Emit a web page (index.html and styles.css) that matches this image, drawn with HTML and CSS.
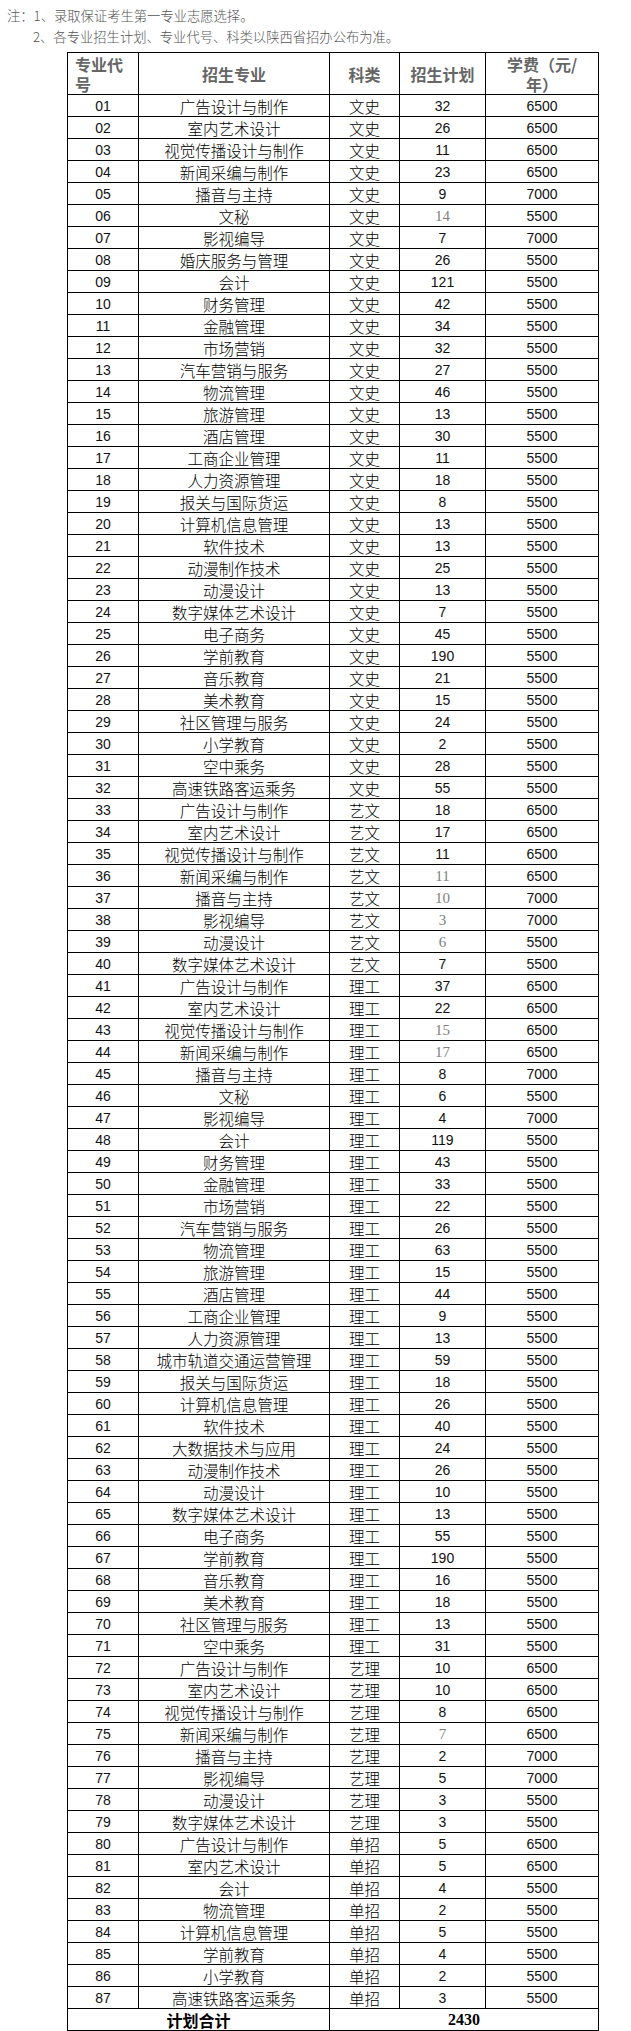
FILE: index.html
```html
<!DOCTYPE html>
<html lang="zh-CN">
<head>
<meta charset="utf-8">
<title>招生计划</title>
<link rel="stylesheet" href="styles.css">
</head>
<body>
<div class="notes">
  <p class="note"><span class="lbl">注：</span>1、录取保证考生第一专业志愿选择。</p>
  <p class="note indent">2、各专业招生计划、专业代号、科类以陕西省招办公布为准。</p>
</div>
<table class="plan">
  <colgroup>
    <col class="c1"><col class="c2"><col class="c3"><col class="c4"><col class="c5">
  </colgroup>
  <thead>
    <tr class="head">
      <th class="left">专业代<br>号</th>
      <th>招生专业</th>
      <th>科类</th>
      <th>招生计划</th>
      <th>学费（元/<br>年）</th>
    </tr>
  </thead>
  <tbody>
    <tr><td class="n">01</td><td>广告设计与制作</td><td>文史</td><td class="n">32</td><td class="n">6500</td></tr>
    <tr><td class="n">02</td><td>室内艺术设计</td><td>文史</td><td class="n">26</td><td class="n">6500</td></tr>
    <tr><td class="n">03</td><td>视觉传播设计与制作</td><td>文史</td><td class="n">11</td><td class="n">6500</td></tr>
    <tr><td class="n">04</td><td>新闻采编与制作</td><td>文史</td><td class="n">23</td><td class="n">6500</td></tr>
    <tr><td class="n">05</td><td>播音与主持</td><td>文史</td><td class="n">9</td><td class="n">7000</td></tr>
    <tr><td class="n">06</td><td>文秘</td><td>文史</td><td class="g">14</td><td class="n">5500</td></tr>
    <tr><td class="n">07</td><td>影视编导</td><td>文史</td><td class="n">7</td><td class="n">7000</td></tr>
    <tr><td class="n">08</td><td>婚庆服务与管理</td><td>文史</td><td class="n">26</td><td class="n">5500</td></tr>
    <tr><td class="n">09</td><td>会计</td><td>文史</td><td class="n">121</td><td class="n">5500</td></tr>
    <tr><td class="n">10</td><td>财务管理</td><td>文史</td><td class="n">42</td><td class="n">5500</td></tr>
    <tr><td class="n">11</td><td>金融管理</td><td>文史</td><td class="n">34</td><td class="n">5500</td></tr>
    <tr><td class="n">12</td><td>市场营销</td><td>文史</td><td class="n">32</td><td class="n">5500</td></tr>
    <tr><td class="n">13</td><td>汽车营销与服务</td><td>文史</td><td class="n">27</td><td class="n">5500</td></tr>
    <tr><td class="n">14</td><td>物流管理</td><td>文史</td><td class="n">46</td><td class="n">5500</td></tr>
    <tr><td class="n">15</td><td>旅游管理</td><td>文史</td><td class="n">13</td><td class="n">5500</td></tr>
    <tr><td class="n">16</td><td>酒店管理</td><td>文史</td><td class="n">30</td><td class="n">5500</td></tr>
    <tr><td class="n">17</td><td>工商企业管理</td><td>文史</td><td class="n">11</td><td class="n">5500</td></tr>
    <tr><td class="n">18</td><td>人力资源管理</td><td>文史</td><td class="n">18</td><td class="n">5500</td></tr>
    <tr><td class="n">19</td><td>报关与国际货运</td><td>文史</td><td class="n">8</td><td class="n">5500</td></tr>
    <tr><td class="n">20</td><td>计算机信息管理</td><td>文史</td><td class="n">13</td><td class="n">5500</td></tr>
    <tr><td class="n">21</td><td>软件技术</td><td>文史</td><td class="n">13</td><td class="n">5500</td></tr>
    <tr><td class="n">22</td><td>动漫制作技术</td><td>文史</td><td class="n">25</td><td class="n">5500</td></tr>
    <tr><td class="n">23</td><td>动漫设计</td><td>文史</td><td class="n">13</td><td class="n">5500</td></tr>
    <tr><td class="n">24</td><td>数字媒体艺术设计</td><td>文史</td><td class="n">7</td><td class="n">5500</td></tr>
    <tr><td class="n">25</td><td>电子商务</td><td>文史</td><td class="n">45</td><td class="n">5500</td></tr>
    <tr><td class="n">26</td><td>学前教育</td><td>文史</td><td class="n">190</td><td class="n">5500</td></tr>
    <tr><td class="n">27</td><td>音乐教育</td><td>文史</td><td class="n">21</td><td class="n">5500</td></tr>
    <tr><td class="n">28</td><td>美术教育</td><td>文史</td><td class="n">15</td><td class="n">5500</td></tr>
    <tr><td class="n">29</td><td>社区管理与服务</td><td>文史</td><td class="n">24</td><td class="n">5500</td></tr>
    <tr><td class="n">30</td><td>小学教育</td><td>文史</td><td class="n">2</td><td class="n">5500</td></tr>
    <tr><td class="n">31</td><td>空中乘务</td><td>文史</td><td class="n">28</td><td class="n">5500</td></tr>
    <tr><td class="n">32</td><td>高速铁路客运乘务</td><td>文史</td><td class="n">55</td><td class="n">5500</td></tr>
    <tr><td class="n">33</td><td>广告设计与制作</td><td>艺文</td><td class="n">18</td><td class="n">6500</td></tr>
    <tr><td class="n">34</td><td>室内艺术设计</td><td>艺文</td><td class="n">17</td><td class="n">6500</td></tr>
    <tr><td class="n">35</td><td>视觉传播设计与制作</td><td>艺文</td><td class="n">11</td><td class="n">6500</td></tr>
    <tr><td class="n">36</td><td>新闻采编与制作</td><td>艺文</td><td class="g">11</td><td class="n">6500</td></tr>
    <tr><td class="n">37</td><td>播音与主持</td><td>艺文</td><td class="g">10</td><td class="n">7000</td></tr>
    <tr><td class="n">38</td><td>影视编导</td><td>艺文</td><td class="g">3</td><td class="n">7000</td></tr>
    <tr><td class="n">39</td><td>动漫设计</td><td>艺文</td><td class="g">6</td><td class="n">5500</td></tr>
    <tr><td class="n">40</td><td>数字媒体艺术设计</td><td>艺文</td><td class="n">7</td><td class="n">5500</td></tr>
    <tr><td class="n">41</td><td>广告设计与制作</td><td>理工</td><td class="n">37</td><td class="n">6500</td></tr>
    <tr><td class="n">42</td><td>室内艺术设计</td><td>理工</td><td class="n">22</td><td class="n">6500</td></tr>
    <tr><td class="n">43</td><td>视觉传播设计与制作</td><td>理工</td><td class="g">15</td><td class="n">6500</td></tr>
    <tr><td class="n">44</td><td>新闻采编与制作</td><td>理工</td><td class="g">17</td><td class="n">6500</td></tr>
    <tr><td class="n">45</td><td>播音与主持</td><td>理工</td><td class="n">8</td><td class="n">7000</td></tr>
    <tr><td class="n">46</td><td>文秘</td><td>理工</td><td class="n">6</td><td class="n">5500</td></tr>
    <tr><td class="n">47</td><td>影视编导</td><td>理工</td><td class="n">4</td><td class="n">7000</td></tr>
    <tr><td class="n">48</td><td>会计</td><td>理工</td><td class="n">119</td><td class="n">5500</td></tr>
    <tr><td class="n">49</td><td>财务管理</td><td>理工</td><td class="n">43</td><td class="n">5500</td></tr>
    <tr><td class="n">50</td><td>金融管理</td><td>理工</td><td class="n">33</td><td class="n">5500</td></tr>
    <tr><td class="n">51</td><td>市场营销</td><td>理工</td><td class="n">22</td><td class="n">5500</td></tr>
    <tr><td class="n">52</td><td>汽车营销与服务</td><td>理工</td><td class="n">26</td><td class="n">5500</td></tr>
    <tr><td class="n">53</td><td>物流管理</td><td>理工</td><td class="n">63</td><td class="n">5500</td></tr>
    <tr><td class="n">54</td><td>旅游管理</td><td>理工</td><td class="n">15</td><td class="n">5500</td></tr>
    <tr><td class="n">55</td><td>酒店管理</td><td>理工</td><td class="n">44</td><td class="n">5500</td></tr>
    <tr><td class="n">56</td><td>工商企业管理</td><td>理工</td><td class="n">9</td><td class="n">5500</td></tr>
    <tr><td class="n">57</td><td>人力资源管理</td><td>理工</td><td class="n">13</td><td class="n">5500</td></tr>
    <tr><td class="n">58</td><td>城市轨道交通运营管理</td><td>理工</td><td class="n">59</td><td class="n">5500</td></tr>
    <tr><td class="n">59</td><td>报关与国际货运</td><td>理工</td><td class="n">18</td><td class="n">5500</td></tr>
    <tr><td class="n">60</td><td>计算机信息管理</td><td>理工</td><td class="n">26</td><td class="n">5500</td></tr>
    <tr><td class="n">61</td><td>软件技术</td><td>理工</td><td class="n">40</td><td class="n">5500</td></tr>
    <tr><td class="n">62</td><td>大数据技术与应用</td><td>理工</td><td class="n">24</td><td class="n">5500</td></tr>
    <tr><td class="n">63</td><td>动漫制作技术</td><td>理工</td><td class="n">26</td><td class="n">5500</td></tr>
    <tr><td class="n">64</td><td>动漫设计</td><td>理工</td><td class="n">10</td><td class="n">5500</td></tr>
    <tr><td class="n">65</td><td>数字媒体艺术设计</td><td>理工</td><td class="n">13</td><td class="n">5500</td></tr>
    <tr><td class="n">66</td><td>电子商务</td><td>理工</td><td class="n">55</td><td class="n">5500</td></tr>
    <tr><td class="n">67</td><td>学前教育</td><td>理工</td><td class="n">190</td><td class="n">5500</td></tr>
    <tr><td class="n">68</td><td>音乐教育</td><td>理工</td><td class="n">16</td><td class="n">5500</td></tr>
    <tr><td class="n">69</td><td>美术教育</td><td>理工</td><td class="n">18</td><td class="n">5500</td></tr>
    <tr><td class="n">70</td><td>社区管理与服务</td><td>理工</td><td class="n">13</td><td class="n">5500</td></tr>
    <tr><td class="n">71</td><td>空中乘务</td><td>理工</td><td class="n">31</td><td class="n">5500</td></tr>
    <tr><td class="n">72</td><td>广告设计与制作</td><td>艺理</td><td class="n">10</td><td class="n">6500</td></tr>
    <tr><td class="n">73</td><td>室内艺术设计</td><td>艺理</td><td class="n">10</td><td class="n">6500</td></tr>
    <tr><td class="n">74</td><td>视觉传播设计与制作</td><td>艺理</td><td class="n">8</td><td class="n">6500</td></tr>
    <tr><td class="n">75</td><td>新闻采编与制作</td><td>艺理</td><td class="g">7</td><td class="n">6500</td></tr>
    <tr><td class="n">76</td><td>播音与主持</td><td>艺理</td><td class="n">2</td><td class="n">7000</td></tr>
    <tr><td class="n">77</td><td>影视编导</td><td>艺理</td><td class="n">5</td><td class="n">7000</td></tr>
    <tr><td class="n">78</td><td>动漫设计</td><td>艺理</td><td class="n">3</td><td class="n">5500</td></tr>
    <tr><td class="n">79</td><td>数字媒体艺术设计</td><td>艺理</td><td class="n">3</td><td class="n">5500</td></tr>
    <tr><td class="n">80</td><td>广告设计与制作</td><td>单招</td><td class="n">5</td><td class="n">6500</td></tr>
    <tr><td class="n">81</td><td>室内艺术设计</td><td>单招</td><td class="n">5</td><td class="n">6500</td></tr>
    <tr><td class="n">82</td><td>会计</td><td>单招</td><td class="n">4</td><td class="n">5500</td></tr>
    <tr><td class="n">83</td><td>物流管理</td><td>单招</td><td class="n">2</td><td class="n">5500</td></tr>
    <tr><td class="n">84</td><td>计算机信息管理</td><td>单招</td><td class="n">5</td><td class="n">5500</td></tr>
    <tr><td class="n">85</td><td>学前教育</td><td>单招</td><td class="n">4</td><td class="n">5500</td></tr>
    <tr><td class="n">86</td><td>小学教育</td><td>单招</td><td class="n">2</td><td class="n">5500</td></tr>
    <tr><td class="n">87</td><td>高速铁路客运乘务</td><td>单招</td><td class="n">3</td><td class="n">5500</td></tr>
    <tr class="total"><td colspan="2">计划合计</td><td colspan="3" class="sum">2430</td></tr>
  </tbody>
</table>
</body>
</html>
```

FILE: styles.css
```css
html, body {
  margin: 0;
  padding: 0;
  background: #ffffff;
}

body {
  font-family: "Noto Sans CJK SC", sans-serif;
  color: #000;
}

.notes {
  padding: 5px 0 0 7px;
  height: 47px;
  box-sizing: border-box;
}

.note {
  margin: 0;
  font-size: 13.3px;
  line-height: 21px;
  color: #555;
  font-weight: 300;
  white-space: nowrap;
}

.note.indent {
  padding-left: 26px;
}

.plan {
  margin: 5px 0 0 67px;
  border-collapse: collapse;
  table-layout: fixed;
  width: 531px;
}

.c1 { width: 71px; }
.c2 { width: 191px; }
.c3 { width: 70px; }
.c4 { width: 86px; }
.c5 { width: 113px; }

.plan th,
.plan td {
  border: 1px solid #000;
  padding: 0;
  text-align: center;
  vertical-align: middle;
  white-space: nowrap;
}

.plan th {
  height: 41px;
  font-size: 16px;
  line-height: 20px;
  font-weight: 700;
  color: #666;
}

.plan th.left {
  text-align: left;
  padding-left: 7px;
}

.plan td {
  height: 21px;
  font-size: 15.5px;
  line-height: 20px;
  font-weight: 300;
}

.plan td.n {
  font-family: "Liberation Sans", "Noto Sans CJK SC", sans-serif;
  font-size: 14px;
  font-weight: 400;
  color: #111;
}

.plan td.g {
  font-family: "Liberation Serif", serif;
  font-size: 15px;
  color: #7f7f7f;
}

.total td {
  font-size: 16px;
  line-height: 18px;
  font-weight: 700;
}

.total td.sum {
  font-family: "Liberation Serif", serif;
  font-size: 16px;
}
```
